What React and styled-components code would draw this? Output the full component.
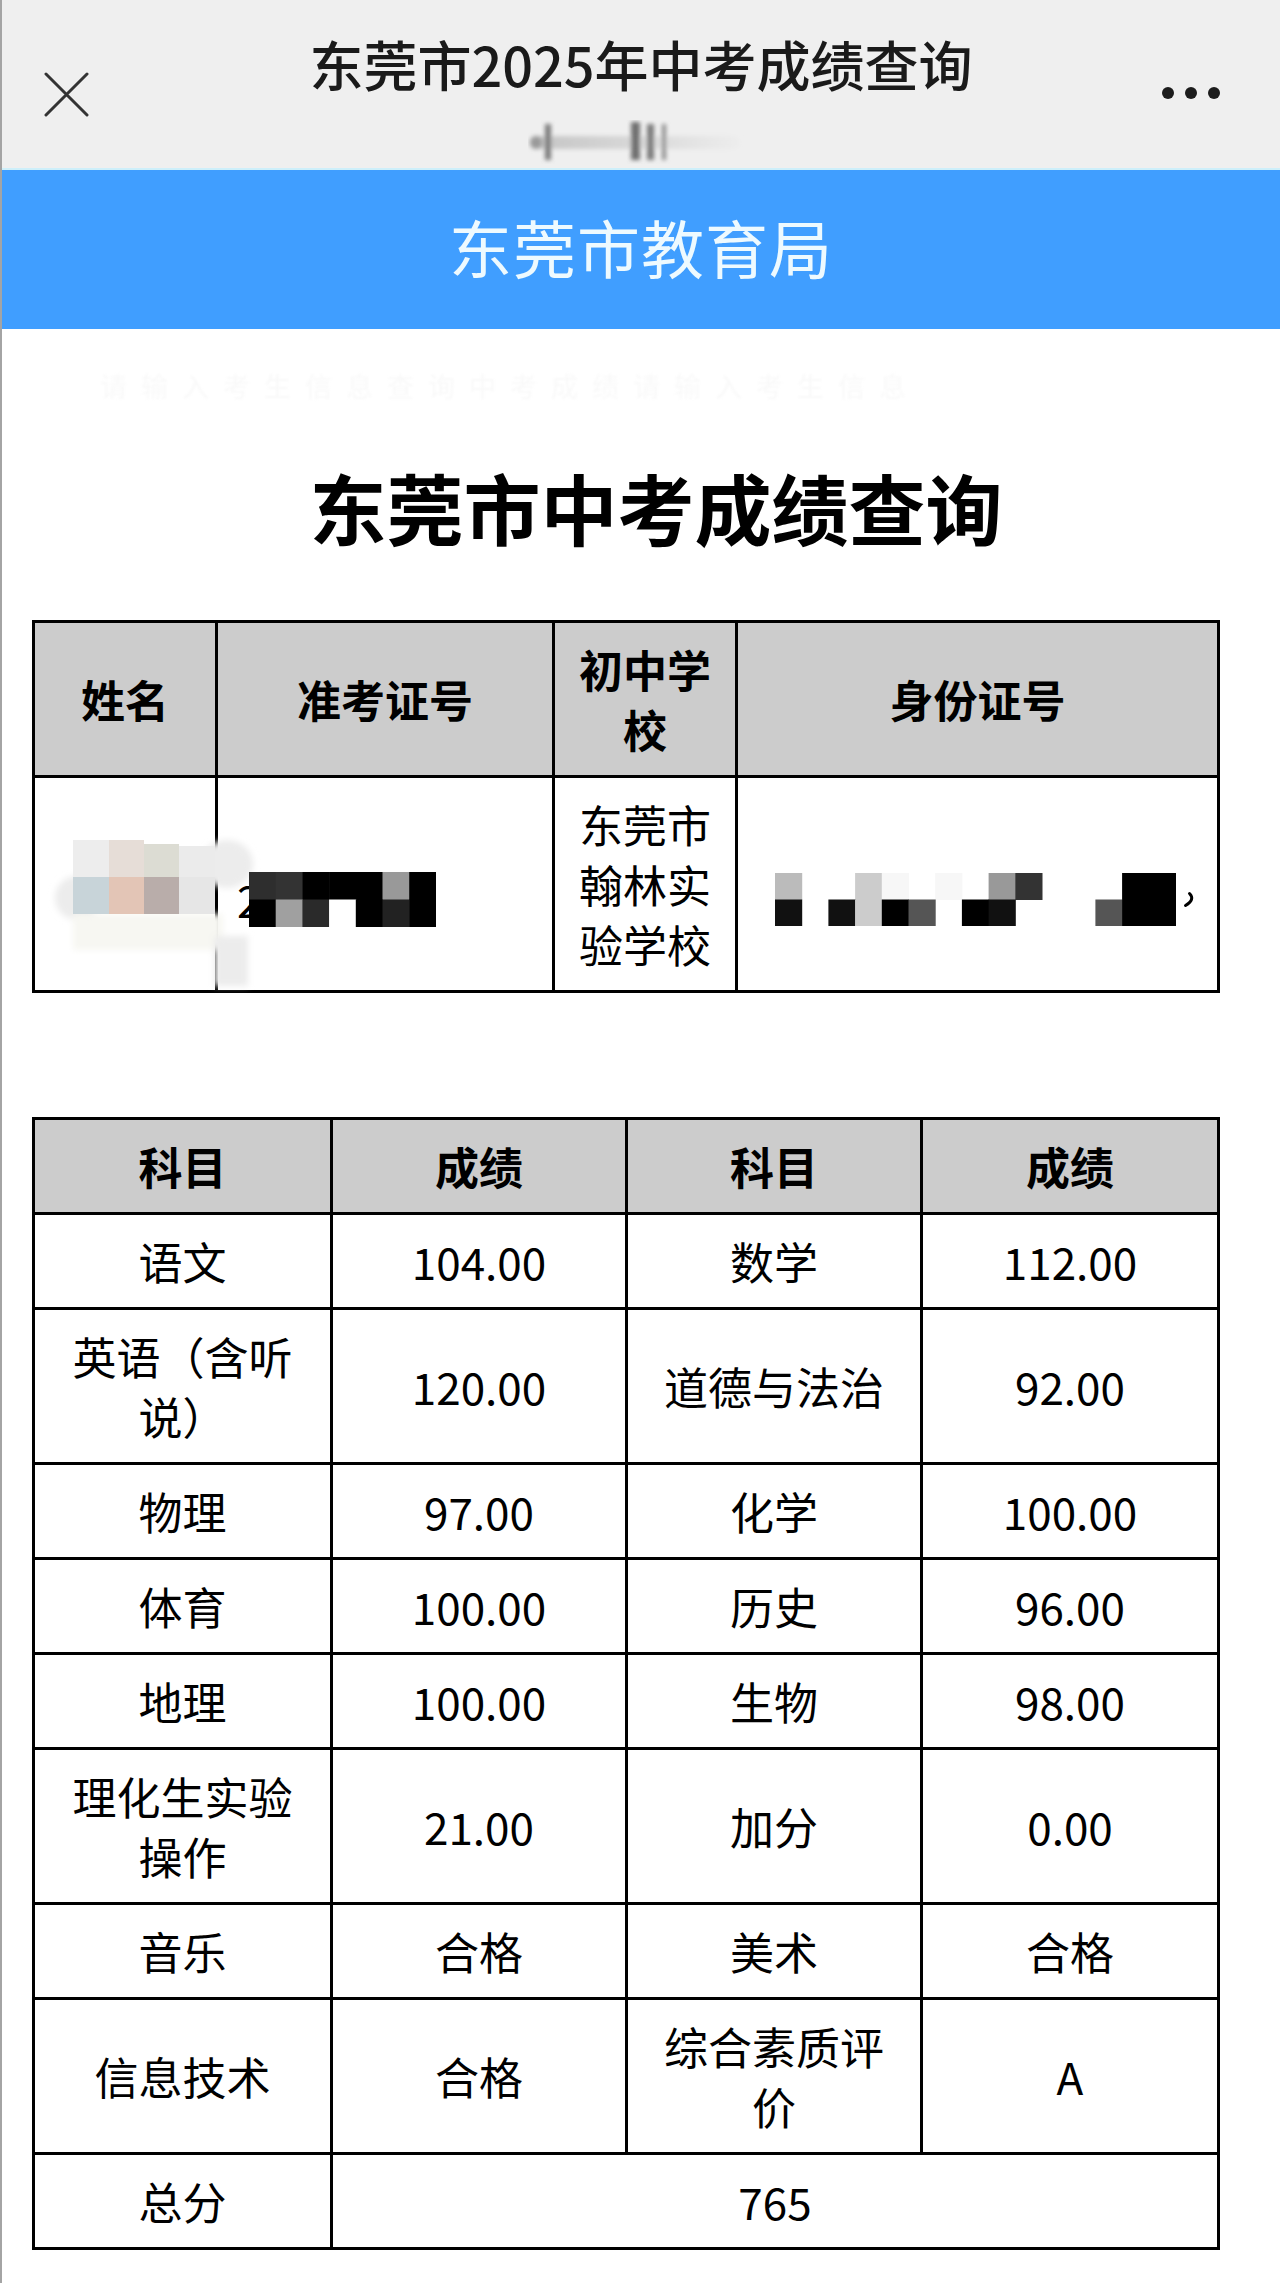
import styled, { createGlobalStyle } from "styled-components";

const GlobalStyle = createGlobalStyle`
  html, body {
    margin: 0;
    padding: 0;
    background: #fff;
  }
  body {
    font-family: "Noto Sans CJK SC", "Noto Sans", sans-serif;
    color: #000;
  }
`

const Page = styled.div`
  width: 1280px;
  min-height: 2283px;
  box-sizing: border-box;
  border-left: 2px solid #a4a4a4;
  background: #fff;
`

const TopBar = styled.div`
  height: 170px;
  background: #efefef;
  display: grid;
  grid-template-columns: 160px 1fr 160px;
  border-bottom: 2px solid #cdeffa;
  box-sizing: border-box;
`

const CloseButton = styled.div`
  padding: 72px 0 0 42px;
`

const MoreButton = styled.div`
  display: flex;
  justify-content: flex-end;
  gap: 11px;
  padding: 87px 60px 0 0;
`

const Dot = styled.span`
  width: 12px;
  height: 12px;
  border-radius: 50%;
  background: #1c1c1c;
`

const TitleBlock = styled.div`
  display: flex;
  flex-direction: column;
  align-items: center;
  padding-top: 32px;
`

const PageTitle = styled.div`
  font-size: 54px;
  line-height: 64px;
  font-weight: 500;
  color: #1a1a1a;
  white-space: nowrap;
`

const SubTitle = styled.div`
  margin-top: 24px;
  margin-left: 4px;
`

const Banner = styled.div`
  height: 159px;
  box-sizing: border-box;
  padding-bottom: 8px;
  background: #409eff;
  display: flex;
  align-items: center;
  justify-content: center;
  color: #eefaff;
  font-size: 63px;
  letter-spacing: 1px;
`

const Content = styled.div`
  padding: 0 0 0 30px;
  width: 1185px;
`

const FaintRow = styled.div`
  margin-top: 42px;
  padding-left: 98px;
  height: 30px;
  font-size: 27px;
  line-height: 30px;
  color: #f9f9f9;
  letter-spacing: 14px;
  white-space: nowrap;
  filter: blur(1px);
`

const MainTitle = styled.h1`
  margin: 56px 0 0;
  padding-left: 30px;
  text-align: center;
  font-size: 77px;
  line-height: 100px;
  font-weight: 700;
  color: #000;
`

const Table = styled.table`
  width: 1185px;
  table-layout: fixed;
  border-collapse: collapse;
  margin-top: ${(p) => p.$top}px;
  border: 3px solid #000;
`

const Th = styled.th`
  background: #cccccc;
  border: 3px solid #000;
  font-size: 44px;
  line-height: 60px;
  font-weight: 700;
  padding: 16px ${(p) => p.$pad}px;
  text-align: center;
  vertical-align: middle;
`

const Td = styled.td`
  position: relative;
  border: 3px solid #000;
  font-size: 44px;
  line-height: 60px;
  font-weight: 400;
  padding: 16px ${(p) => p.$pad}px;
  text-align: ${(p) => p.$align || "center"};
  vertical-align: middle;
`

const Masked = styled.div`
  display: flex;
  align-items: center;
  margin-top: 30px;
  margin-left: ${(p) => p.$left}px;
`

const MaskDigit = styled.span`
  font-size: 44px;
  line-height: 56px;
  margin-right: -12px;
  flex-shrink: 0;
`

const MaskCover = styled.svg`
  position: relative;
  flex-shrink: 0;
`

const NameMask = styled.svg`
  position: absolute;
  left: 14px;
  top: 58px;
  overflow: visible;
`

const CloseIcon = () => (
    <svg width="45" height="45" viewBox="0 0 45 45">
        <path d="M2 2 L43 43 M43 2 L2 43" stroke="#333" strokeWidth="3" strokeLinecap="round"/>
    </svg>
)

const BlurredSub = () => (
    <svg width="230" height="44" viewBox="0 0 230 44">
        <defs>
            <filter id="sb" x="-20%" y="-50%" width="140%" height="200%">
                <feGaussianBlur stdDeviation="2.2"/>
            </filter>
            <linearGradient id="sg" x1="0" x2="1" y1="0" y2="0">
                <stop offset="0" stopColor="#c4c4c4"/>
                <stop offset="0.6" stopColor="#dcdcdc"/>
                <stop offset="1" stopColor="#ededed"/>
            </linearGradient>
        </defs>
        <g filter="url(#sb)">
            <rect x="2" y="16" width="210" height="13" rx="6" fill="url(#sg)"/>
            <rect x="2" y="16" width="12" height="13" rx="6" fill="#9a9a9a"/>
            <rect x="17" y="4" width="6" height="36" fill="#7a7a7a"/>
            <rect x="103" y="2" width="9" height="38" fill="#6f6f6f"/>
            <rect x="119" y="4" width="7" height="36" fill="#7a7a7a"/>
            <rect x="134" y="4" width="4" height="36" fill="#8a8a8a"/>
        </g>
    </svg>
)

// mosaic rows for the redacted admission number and id card
const examCells = [
    ["#2e2e2e", "#333", "#000", "#000", "#000", "#999", "#000"],
    ["#000", "#a0a0a0", "#2a2a2a", "#fff", "#000", "#222", "#000"],
]

const idCells = [
    ["#bbb", null, null, "#ccc", "#f7f7f7", null, "#f7f7f7", null, "#999", "#333", null, null, null, "#000", "#000"],
    ["#111", null, "#111", "#ccc", "#000", "#555", null, "#000", "#111", null, null, null, "#555", "#000", "#000"],
]

const Mosaic = ({ cells, size = 26.7, h = 27.5, tail }) => {
    const cols = cells[0].length
    const w = cols * size + (tail ? 30 : 0)
    return (
        <MaskCover width={w} height={h * 2} viewBox={`0 0 ${w} ${h * 2}`}>
            {cells.map((row, r) =>
                row.map((c, i) => c && (
                    <rect key={`${r}-${i}`} x={i * size} y={r * h} width={size + 0.5} height={h + 0.5} fill={c}/>
                ))
            )}
            {tail && (
                <path d={`M${cols * size + 14} ${h - 6} q 6 6 -4 12`} stroke="#000" strokeWidth="3" fill="none" strokeLinecap="round"/>
            )}
        </MaskCover>
    )
}

const NameBlur = () => (
    <NameMask width="200" height="155" viewBox="0 0 200 155">
        <defs>
            <filter id="nb" x="-20%" y="-20%" width="140%" height="140%">
                <feGaussianBlur stdDeviation="3"/>
            </filter>
        </defs>
        <g filter="url(#nb)">
            <ellipse cx="28" cy="62" rx="22" ry="22" fill="#ececec"/>
            <ellipse cx="178" cy="28" rx="26" ry="24" fill="#ececec"/>
            <rect x="24" y="78" width="150" height="36" fill="#f7f7f2"/>
            <rect x="165" y="100" width="34" height="50" fill="#ececec"/>
        </g>
        <rect x="24" y="4" width="36" height="37" fill="#ededed"/>
        <rect x="60" y="4" width="35" height="37" fill="#e6ddd7"/>
        <rect x="95" y="8" width="35" height="33" fill="#dcdcd3"/>
        <rect x="130" y="10" width="36" height="31" fill="#ebebeb"/>
        <rect x="24" y="41" width="36" height="37" fill="#c8d4d9"/>
        <rect x="60" y="41" width="35" height="37" fill="#e3c5b6"/>
        <rect x="95" y="41" width="35" height="37" fill="#b9adaa"/>
        <rect x="130" y="41" width="36" height="37" fill="#e6e6e6"/>
    </NameMask>
)

const scores = [
    [["语文", "104.00"], ["数学", "112.00"]],
    [["英语（含听说）", "120.00"], ["道德与法治", "92.00"]],
    [["物理", "97.00"], ["化学", "100.00"]],
    [["体育", "100.00"], ["历史", "96.00"]],
    [["地理", "100.00"], ["生物", "98.00"]],
    [["理化生实验操作", "21.00"], ["加分", "0.00"]],
    [["音乐", "合格"], ["美术", "合格"]],
    [["信息技术", "合格"], ["综合素质评价", "A"]],
]

const App = () => {
    return (
        <Page>
            <GlobalStyle/>
            <TopBar>
                <CloseButton><CloseIcon/></CloseButton>
                <TitleBlock>
                    <PageTitle>东莞市2025年中考成绩查询</PageTitle>
                    <SubTitle><BlurredSub/></SubTitle>
                </TitleBlock>
                <MoreButton>
                    <Dot/><Dot/><Dot/>
                </MoreButton>
            </TopBar>
            <Banner>东莞市教育局</Banner>
            <FaintRow>请输入考生信息查询中考成绩请输入考生信息</FaintRow>
            <MainTitle>东莞市中考成绩查询</MainTitle>
            <Content>
                <Table $top={63}>
                    <colgroup>
                        <col style={{ width: 183 }}/>
                        <col style={{ width: 337 }}/>
                        <col style={{ width: 183 }}/>
                        <col style={{ width: 482 }}/>
                    </colgroup>
                    <thead>
                    <tr>
                        <Th $pad={12}>姓名</Th>
                        <Th $pad={12}>准考证号</Th>
                        <Th $pad={12}>初中学校</Th>
                        <Th $pad={12}>身份证号</Th>
                    </tr>
                    </thead>
                    <tbody>
                    <tr>
                        <Td $pad={12}><NameBlur/></Td>
                        <Td $pad={12} $align="left">
                            <Masked $left={7}>
                                <MaskDigit>2</MaskDigit>
                                <Mosaic cells={examCells}/>
                            </Masked>
                        </Td>
                        <Td $pad={12}>东莞市翰林实验学校</Td>
                        <Td $pad={12} $align="left">
                            <Masked $left={25}>
                                <Mosaic cells={idCells} h={26.5} tail/>
                            </Masked>
                        </Td>
                    </tr>
                    </tbody>
                </Table>
                <Table $top={124}>
                    <colgroup>
                        <col style={{ width: 298 }}/>
                        <col style={{ width: 295 }}/>
                        <col style={{ width: 295 }}/>
                        <col style={{ width: 297 }}/>
                    </colgroup>
                    <thead>
                    <tr>
                        <Th $pad={24}>科目</Th>
                        <Th $pad={24}>成绩</Th>
                        <Th $pad={24}>科目</Th>
                        <Th $pad={24}>成绩</Th>
                    </tr>
                    </thead>
                    <tbody>
                    {scores.map((row, i) => (
                        <tr key={i}>
                            <Td $pad={24}>{row[0][0]}</Td>
                            <Td $pad={24}>{row[0][1]}</Td>
                            <Td $pad={24}>{row[1][0]}</Td>
                            <Td $pad={24}>{row[1][1]}</Td>
                        </tr>
                    ))}
                    <tr>
                        <Td $pad={24}>总分</Td>
                        <Td $pad={24} colSpan={3}>765</Td>
                    </tr>
                    </tbody>
                </Table>
            </Content>
        </Page>
    )
}

export default App
